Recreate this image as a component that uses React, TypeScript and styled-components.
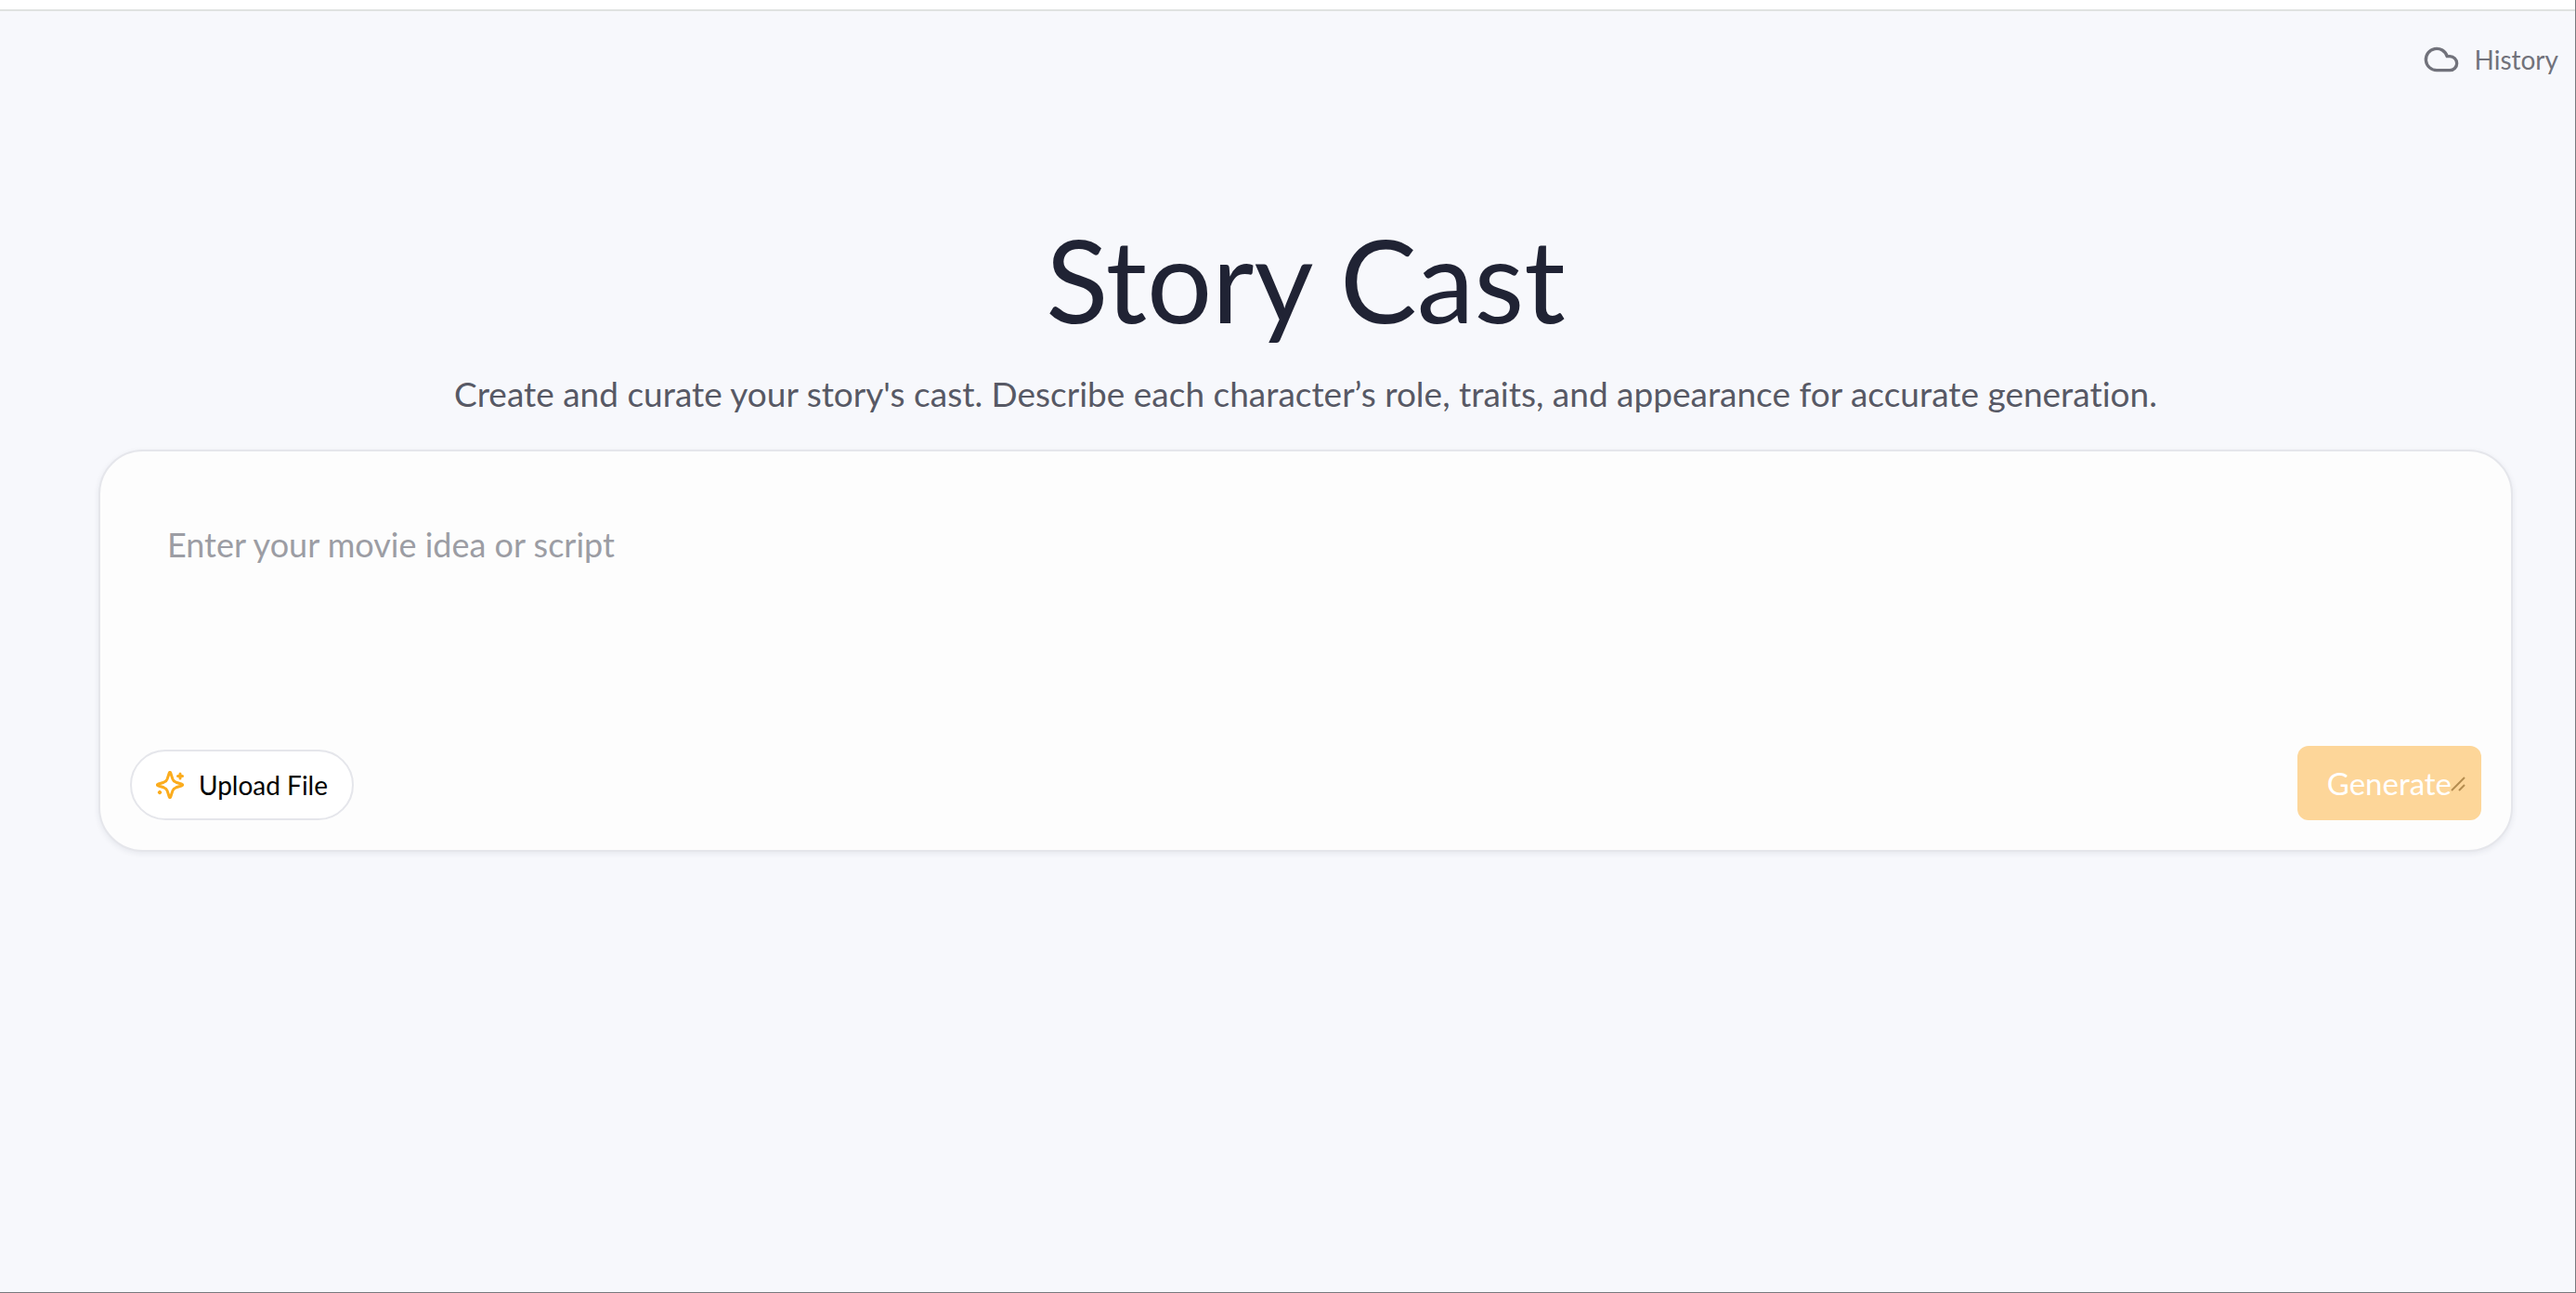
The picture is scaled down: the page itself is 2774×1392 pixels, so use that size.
import React from "react";
import styled, { createGlobalStyle } from "styled-components";
import { Cloud } from "lucide-react";

const ink = "#202334";

const GlobalStyle = createGlobalStyle`
  * { box-sizing: border-box; }
  html, body, #root { height: 100%; }
  body { margin: 0; background: #f7f8fc; color: ${ink}; font-variant-ligatures: none; }
  body, button, textarea { font-family: Lato, "Liberation Sans", sans-serif; }
`;

const Page = styled.div`
  min-height: 100%;
  display: flex;
  flex-direction: column;
  background: #f7f8fc;
  border-right: 1px solid #77797d;
  border-bottom: 1px solid #77797d;
`;

const TopBar = styled.div`
  height: 12px;
  background: #ffffff;
  border-bottom: 2px solid #e0e2e1;
`;

const Toolbar = styled.header`
  display: flex;
  justify-content: flex-end;
  padding: 32px 18px 0;
`;

const HistoryButton = styled.button`
  display: flex;
  align-items: center;
  gap: 16px;
  padding: 0;
  border: 0;
  background: none;
  color: #71727b;
  font-size: 28px;
  line-height: 40px;
  cursor: pointer;
`;

const Main = styled.main`
  display: flex;
  flex-direction: column;
  padding: 142px 67px 0 106px;
`;

const Title = styled.h1`
  margin: 0;
  font-size: 124px;
  font-weight: 400;
  line-height: 148px;
  text-align: center;
`;

const Subtitle = styled.p`
  margin: 26px 0 36px;
  color: #575965;
  font-size: 37px;
  line-height: 48px;
  text-align: center;
`;

const Card = styled.form`
  display: flex;
  flex-direction: column;
  padding: 32px;
  background: #fdfdfd;
  border: 2px solid #e5e6eb;
  border-radius: 48px;
  box-shadow: 0 2px 6px rgba(30, 35, 60, 0.08);
`;

const Prompt = styled.textarea`
  height: 285px;
  padding: 40px;
  border: 0;
  outline: 0;
  resize: none;
  background: transparent;
  color: ${ink};
  font-size: 36px;
  line-height: 56px;
  &::placeholder { color: #9c9da4; opacity: 1; }
`;

const Actions = styled.div`
  display: flex;
  align-items: flex-end;
  justify-content: space-between;
`;

const UploadButton = styled.button`
  display: flex;
  align-items: center;
  gap: 16px;
  height: 76px;
  padding: 0 26px;
  border: 2px solid #e5e6eb;
  border-radius: 38px;
  background: #ffffff;
  color: #000000;
  font-size: 28px;
  line-height: 40px;
  cursor: pointer;
`;

const GenerateButton = styled.button`
  position: relative;
  height: 80px;
  padding: 0 32px;
  border: 0;
  border-radius: 12px;
  background: #fdd699;
  color: #ffffff;
  font-size: 33px;
  line-height: 48px;
`;

const Grip = styled.svg`
  position: absolute;
  right: 16px;
  bottom: 30px;
`;

function SparkleIcon() {
  return (
    <svg width="30" height="30" viewBox="0 0 30 30" fill="none" stroke="#fbac1d" strokeWidth="3" strokeLinecap="round" strokeLinejoin="round" aria-hidden="true">
      <path d="M14.3 2 C14.6 1.2 15.4 1.2 15.7 2 L17.8 8.4 Q18.8 11.2 21.6 12.2 L28 14.3 C28.8 14.6 28.8 15.4 28 15.7 L21.6 17.8 Q18.8 18.8 17.8 21.6 L15.7 28 C15.4 28.8 14.6 28.8 14.3 28 L12.2 21.6 Q11.2 18.8 8.4 17.8 L2 15.7 C1.2 15.4 1.2 14.6 2 14.3 L8.4 12.2 Q11.2 11.2 12.2 8.4 Z" />
      <path d="M26 3v5M23.5 5.5h5" />
      <path d="M4 22.2v1.6M3.2 23h1.6" />
    </svg>
  );
}

export default function App() {
  return (
    <Page>
      <GlobalStyle />
      <TopBar />
      <Toolbar>
        <HistoryButton type="button">
          <Cloud size={40} strokeWidth={2} />
          History
        </HistoryButton>
      </Toolbar>
      <Main>
        <Title>Story Cast</Title>
        <Subtitle>
          Create and curate your story's cast. Describe each character’s role, traits, and appearance for accurate generation.
        </Subtitle>
        <Card>
          <Prompt aria-label="Movie idea or script" placeholder="Enter your movie idea or script" />
          <Actions>
            <UploadButton type="button">
              <SparkleIcon />
              Upload File
            </UploadButton>
            <GenerateButton type="button">
              Generate
              <Grip width="18" height="18" viewBox="0 0 18 18" fill="none" stroke="#b58d50" strokeWidth="2">
                <path d="M2 16 16 2M10 16l6-6" />
              </Grip>
            </GenerateButton>
          </Actions>
        </Card>
      </Main>
    </Page>
  );
}
